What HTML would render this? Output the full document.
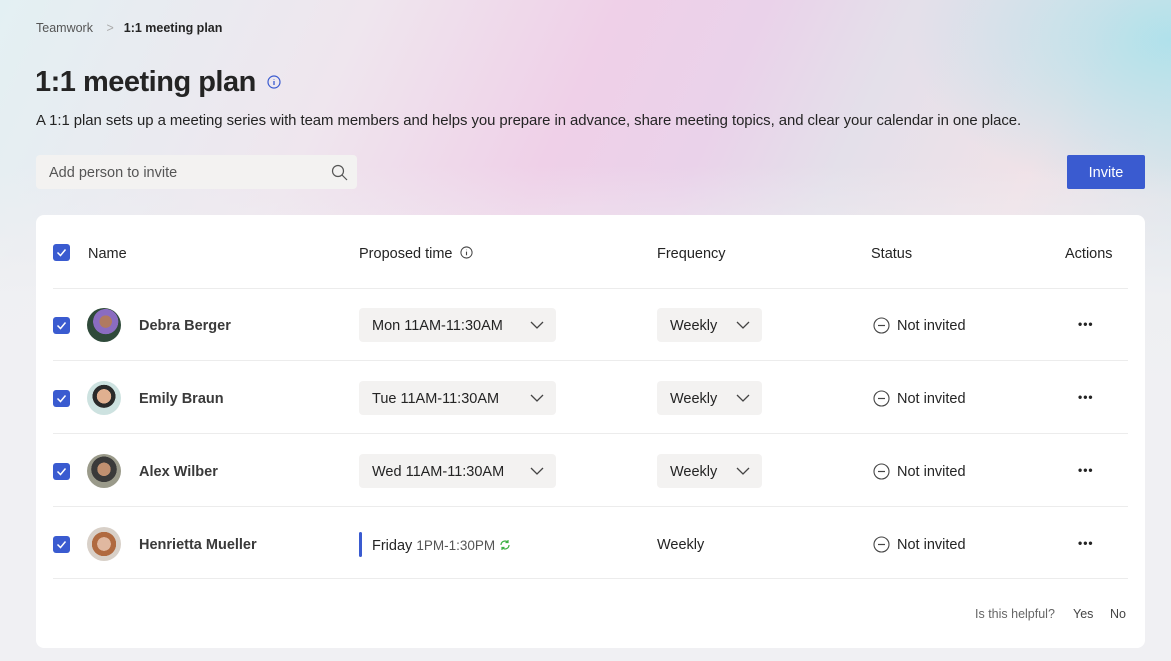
<!DOCTYPE html>
<html><head><meta charset="utf-8"><style>
*{box-sizing:border-box;margin:0;padding:0}
body{width:1171px;height:661px;overflow:hidden;font-family:"Liberation Sans",sans-serif;color:#242424;position:relative;
background:linear-gradient(115deg,#e3f0f3 0%,#efe6ee 25%,#efd0e8 42%,#ead2ea 52%,#e4e0ea 62%,#f0e2e8 75%,#c8e8ee 100%);}
.bgc{position:absolute;left:0;top:0;width:1171px;height:661px;background:radial-gradient(ellipse 260px 160px at 1171px 40px,rgba(170,225,235,.9),rgba(170,225,235,0))}
.bg2{position:absolute;left:0;top:0;width:1171px;height:661px;background:linear-gradient(180deg,rgba(240,240,243,0) 0%,rgba(240,240,243,0) 25%,rgba(240,240,243,.9) 45%,#f0f0f3 60%);}
.abs{position:absolute}
.crumb{left:36px;top:21px;font-size:12.5px;color:#555}
.crumb b{color:#242424;margin-left:10px}
h1{position:absolute;left:35px;top:66px;font-size:29px;font-weight:600;letter-spacing:-.5px}
.desc{left:36px;top:113px;font-size:14.9px;letter-spacing:-.05px}
.search{left:36px;top:155px;width:321px;height:34px;background:#f3f2f1;border-radius:4px;font-size:14.5px;color:#555;padding:10px 13px}
.invite{left:1067px;top:155px;width:78px;height:34px;background:#3a5bd0;color:#fff;font-size:14.5px;text-align:center;line-height:37px;border-radius:2px}
.card{left:36px;top:215px;width:1109px;height:433px;background:#fff;border-radius:8px}
.line{position:absolute;left:53px;width:1075px;height:1px;background:#ececec}
.cb{position:absolute;left:53px;width:17px;height:17px;background:#3a5bd0;border-radius:3px}
.t{position:absolute;font-size:14.5px;white-space:nowrap}
.n{font-weight:bold;color:#3a3a3a}
.av{position:absolute;left:87px;width:34px;height:34px;border-radius:50%}
.dd{position:absolute;height:34px;background:#f3f2f1;border-radius:4px;font-size:14.5px;padding:10px 13px}
.dd svg{position:absolute;right:12px;top:13px}
.st{position:absolute;left:873px}
.dots{position:absolute;left:1078px;font-size:12px;font-weight:bold;letter-spacing:1px}
</style></head><body>
<div class="bgc"></div>
<div class="bg2"></div>
<div class="abs crumb">Teamwork <span style="color:#aaa;margin-left:10px">&gt;</span><b>1:1 meeting plan</b></div>
<h1>1:1 meeting plan <svg width="14" height="14" viewBox="0 0 14 14" style="vertical-align:2px;margin-left:4px"><circle cx="7" cy="7" r="6" fill="none" stroke="#3a5bd0" stroke-width="1.2"/><path d="M7 6v4M7 4v.5" stroke="#3a5bd0" stroke-width="1.3"/></svg></h1>
<div class="abs desc">A 1:1 plan sets up a meeting series with team members and helps you prepare in advance, share meeting topics, and clear your calendar in one place.</div>
<div class="abs search">Add person to invite<svg class="abs" style="left:295px;top:9px" width="17" height="17" viewBox="0 0 17 17"><circle cx="7" cy="7" r="5.5" fill="none" stroke="#555" stroke-width="1.2"/><path d="M11 11l5 5" stroke="#555" stroke-width="1.2"/></svg></div>
<div class="abs invite">Invite</div>
<div class="abs card"></div>
<svg width="0" height="0" style="position:absolute"><defs><path id="ck" d="M4.5 8.5l3 3 5-6" fill="none" stroke="#fff" stroke-width="1.5"/><path id="chev" d="M1 1l6 6 6-6" fill="none" stroke="#444" stroke-width="1.3"/></defs></svg>
<div class="cb" style="top:244px"><svg width="17" height="17"><use href="#ck"/></svg></div>
<div class="t" style="left:88px;top:246px">Name</div>
<div class="t" style="left:359px;top:246px">Proposed time <svg width="13" height="13" viewBox="0 0 14 14" style="vertical-align:-1px;margin-left:3px"><circle cx="7" cy="7" r="6" fill="none" stroke="#444" stroke-width="1.1"/><path d="M7 6v4M7 4v.5" stroke="#444" stroke-width="1.2"/></svg></div>
<div class="t" style="left:657px;top:246px">Frequency</div>
<div class="t" style="left:871px;top:246px">Status</div>
<div class="t" style="left:1065px;top:246px">Actions</div>
<div class="line" style="top:288px"></div>
<div class="line" style="top:360px"></div>
<div class="line" style="top:433px"></div>
<div class="line" style="top:506px"></div>
<div class="line" style="top:578px"></div>

<div class="cb" style="top:317px"><svg width="17" height="17"><use href="#ck"/></svg></div>
<div class="av" style="top:308px;background:radial-gradient(circle at 55% 40%,#b07a60 0 22%,#8a6cc0 23% 45%,#2f4a3a 46%)"></div>
<div class="t n" style="left:139px;top:318px">Debra Berger</div>
<div class="dd" style="left:359px;top:308px;width:197px">Mon 11AM-11:30AM<svg width="14" height="9"><use href="#chev"/></svg></div>
<div class="dd" style="left:657px;top:308px;width:105px">Weekly<svg width="14" height="9"><use href="#chev"/></svg></div>

<div class="cb" style="top:390px"><svg width="17" height="17"><use href="#ck"/></svg></div>
<div class="av" style="top:381px;background:radial-gradient(circle at 50% 45%,#e0b090 0 28%,#2a2a2a 29% 45%,#cde2e0 46%)"></div>
<div class="t n" style="left:139px;top:391px">Emily Braun</div>
<div class="dd" style="left:359px;top:381px;width:197px">Tue 11AM-11:30AM<svg width="14" height="9"><use href="#chev"/></svg></div>
<div class="dd" style="left:657px;top:381px;width:105px">Weekly<svg width="14" height="9"><use href="#chev"/></svg></div>

<div class="cb" style="top:463px"><svg width="17" height="17"><use href="#ck"/></svg></div>
<div class="av" style="top:454px;background:radial-gradient(circle at 50% 45%,#c09070 0 26%,#3a3a3a 27% 50%,#9a9a8a 51%)"></div>
<div class="t n" style="left:139px;top:464px">Alex Wilber</div>
<div class="dd" style="left:359px;top:454px;width:197px">Wed 11AM-11:30AM<svg width="14" height="9"><use href="#chev"/></svg></div>
<div class="dd" style="left:657px;top:454px;width:105px">Weekly<svg width="14" height="9"><use href="#chev"/></svg></div>

<div class="cb" style="top:536px"><svg width="17" height="17"><use href="#ck"/></svg></div>
<div class="av" style="top:527px;background:radial-gradient(circle at 50% 50%,#e0b8a0 0 28%,#b06a40 29% 50%,#d8d0c8 51%)"></div>
<div class="t n" style="left:139px;top:537px">Henrietta Mueller</div>
<div class="abs" style="left:359px;top:532px;width:3px;height:25px;background:#3a5bd0;border-radius:2px"></div>
<div class="t" style="left:372px;top:538px">Friday <span style="font-size:13.5px;color:#555">1PM-1:30PM</span> <svg width="12" height="12" viewBox="0 0 12 12" style="vertical-align:-1px"><path d="M2 6a4 4 0 0 1 7-2.6M10 6a4 4 0 0 1-7 2.6M9 1v2.5H6.5M3 11V8.5h2.5" fill="none" stroke="#3cb043" stroke-width="1.2"/></svg></div>
<div class="t" style="left:657px;top:537px">Weekly</div>

<div class="st" style="top:317px"><svg width="17" height="17"><circle cx="8.5" cy="8.5" r="7.5" fill="none" stroke="#444" stroke-width="1.1"/><path d="M5 8.5h7" stroke="#444" stroke-width="1.2"/></svg></div>
<div class="t" style="left:897px;top:318px">Not invited</div>
<div class="st" style="top:390px"><svg width="17" height="17"><circle cx="8.5" cy="8.5" r="7.5" fill="none" stroke="#444" stroke-width="1.1"/><path d="M5 8.5h7" stroke="#444" stroke-width="1.2"/></svg></div>
<div class="t" style="left:897px;top:391px">Not invited</div>
<div class="st" style="top:463px"><svg width="17" height="17"><circle cx="8.5" cy="8.5" r="7.5" fill="none" stroke="#444" stroke-width="1.1"/><path d="M5 8.5h7" stroke="#444" stroke-width="1.2"/></svg></div>
<div class="t" style="left:897px;top:464px">Not invited</div>
<div class="st" style="top:536px"><svg width="17" height="17"><circle cx="8.5" cy="8.5" r="7.5" fill="none" stroke="#444" stroke-width="1.1"/><path d="M5 8.5h7" stroke="#444" stroke-width="1.2"/></svg></div>
<div class="t" style="left:897px;top:537px">Not invited</div>
<div class="dots" style="top:317px">•••</div>
<div class="dots" style="top:390px">•••</div>
<div class="dots" style="top:463px">•••</div>
<div class="dots" style="top:536px">•••</div>

<div class="t" style="left:975px;top:607px;font-size:12.5px;color:#666">Is this helpful?</div>
<div class="t" style="left:1073px;top:607px;font-size:12.5px;color:#444">Yes</div>
<div class="t" style="left:1110px;top:607px;font-size:12.5px;color:#444">No</div>
</body></html>
